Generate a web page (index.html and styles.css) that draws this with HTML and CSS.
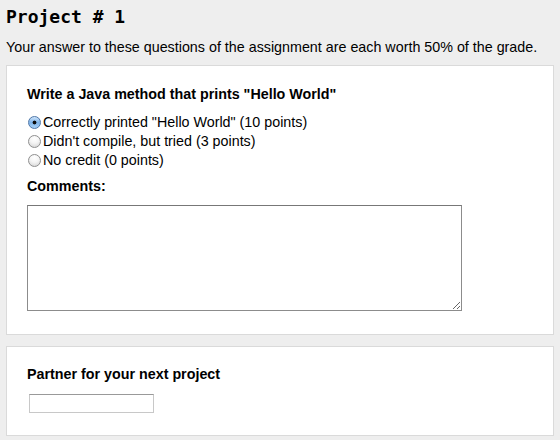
FILE: index.html
```html
<!DOCTYPE html>
<html>
<head>
<meta charset="utf-8">
<link rel="stylesheet" href="styles.css">
</head>
<body>
<h1 class="title">Project # 1</h1>
<p class="intro">Your answer to these questions of the assignment are each worth 50% of the grade.</p>
<section class="card card-q">
  <h2 class="q-title">Write a Java method that prints "Hello World"</h2>
  <div class="options">
    <label class="option"><input type="radio" name="q1" class="radio" checked>Correctly printed "Hello World" (10 points)</label>
    <label class="option"><input type="radio" name="q1" class="radio">Didn't compile, but tried (3 points)</label>
    <label class="option"><input type="radio" name="q1" class="radio">No credit (0 points)</label>
  </div>
  <h3 class="label">Comments:</h3>
  <textarea class="comments"></textarea>
</section>
<section class="card card-p">
  <h2 class="q-title">Partner for your next project</h2>
  <input type="text" class="partner">
</section>
</body>
</html>
```
FILE: styles.css
```css
html, body {
  margin: 0;
  background: #eeeeee;
}
body {
  padding: 0 6px;
  font-family: "Liberation Sans", Arial, sans-serif;
  font-size: 14.3px;
  color: #000;
}
.title {
  margin: 0;
  padding-top: 6px;
  font-family: "DejaVu Sans Mono", monospace;
  font-size: 18px;
  font-weight: bold;
  line-height: 22px;
}
.intro {
  margin: 11px 0 0;
  line-height: 17px;
  height: 26px;
}
.card {
  background: #fff;
  border: 1px solid #dadada;
  padding: 0 20px;
  margin-bottom: 11px;
}
.card-q {
  height: 268px;
}
.card-p {
  height: 88px;
}
.q-title {
  margin: 20px 0 0;
  font-size: 14.3px;
  font-weight: bold;
  line-height: 17px;
}
.card-p .q-title {
  margin-top: 19px;
}
.options {
  margin-top: 10px;
  display: flex;
  flex-direction: column;
}
.option {
  display: flex;
  align-items: center;
  height: 19px;
  line-height: 19px;
}
.radio {
  appearance: none;
  -webkit-appearance: none;
  margin: 0 2px 0 1px;
  width: 13px;
  height: 13px;
  border-radius: 50%;
  border: 1px solid #8f8f8f;
  background: radial-gradient(circle at 50% 25%, #ffffff 0%, #f4f4f4 45%, #d0d0d0 100%);
  box-sizing: border-box;
}
.radio:checked {
  border-color: #4f77a8;
  background: radial-gradient(circle at 50% 50%, #0d0d0d 0, #0d0d0d 1.5px, transparent 2.3px),
              linear-gradient(#cfe5fb, #7fb4ea 50%, #a9d2f7);
}
.label {
  margin: 8px 0 0;
  font-size: 14.3px;
  font-weight: bold;
  line-height: 17px;
}
.comments {
  display: block;
  margin: 10px 0 0;
  width: 435px;
  height: 106px;
  box-sizing: border-box;
  border: 1px solid #8c8c8c;
  border-top-color: #777;
  padding: 2px;
  resize: both;
  background: #fff;
}
.partner {
  display: block;
  margin: 11px 0 0 2px;
  width: 125px;
  height: 19px;
  box-sizing: border-box;
  border: 1px solid #c8c8c8;
  border-top-color: #999;
  padding: 1px 2px;
  background: #fff;
}
```
